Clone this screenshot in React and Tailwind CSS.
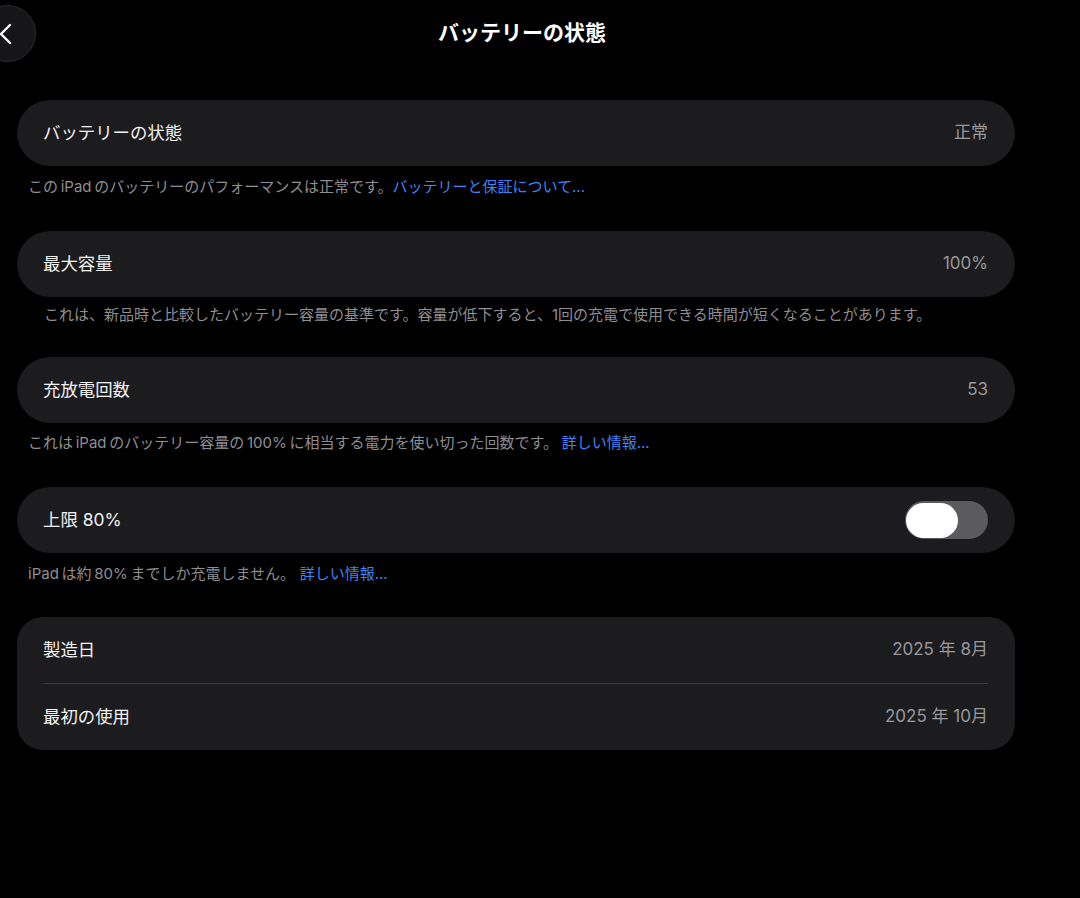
const font = { fontFamily: 'Inter, "Noto Sans CJK JP", sans-serif' };

function Row({ label, value, children }) {
  return (
    <div className="flex h-[66px] items-center justify-between pl-[26px] pr-[27px]">
      <span className="text-[17.4px] font-normal text-[#f2f2f2]">{label}</span>
      {value && <span className="text-[17px] text-[#98989d]">{value}</span>}
      {children}
    </div>
  );
}

function Card({ children }) {
  return <div className="w-[998px] rounded-[33px] bg-[#1c1c1e]">{children}</div>;
}

function Note({ children, className = "" }) {
  return (
    <p className={"text-[15px] leading-[20px] text-[#8e8e93] [word-spacing:-1.5px] " + className}>{children}</p>
  );
}

function Link({ children, className = "" }) {
  return <span className={"text-[#3d84f7] " + className}>{children}</span>;
}

function Toggle() {
  return (
    <div className="flex h-[38px] w-[83px] items-center rounded-full bg-[#5a5a5f] p-[1px]">
      <div className="h-[35px] w-[52px] rounded-full bg-white" />
    </div>
  );
}

export default function App() {
  return (
    <div className="min-h-[898px] w-[1080px] overflow-hidden bg-black" style={font}>
      <div className="relative flex h-[66px] w-[1044px] items-center justify-center">
        <div className="absolute left-[-21px] top-[5px] flex h-[57px] w-[57px] items-center justify-start rounded-full border border-[#2c2c2e] bg-[#161618] pl-[19px]">
          <svg width="14" height="22" viewBox="0 0 14 22" fill="none">
            <path d="M11 2 L2 11 L11 20" stroke="white" strokeWidth="2.4" strokeLinecap="round" strokeLinejoin="round" />
          </svg>
        </div>
        <h1 className="text-[21px] font-bold text-white">バッテリーの状態</h1>
      </div>

      <div className="pl-[17px] pt-[34px]">
        <Card>
          <Row label="バッテリーの状態" value="正常" />
        </Card>
        <Note className="pl-[11px] pt-[11px] pb-[34px]">
          この iPad のバッテリーのパフォーマンスは正常です。<Link>バッテリーと保証について...</Link>
        </Note>

        <Card>
          <Row label="最大容量" value="100%" />
        </Card>
        <Note className="pl-[27px] pt-[8px] pb-[32px]">
          これは、新品時と比較したバッテリー容量の基準です。容量が低下すると、1回の充電で使用できる時間が短くなることがあります。
        </Note>

        <Card>
          <Row label="充放電回数" value="53" />
        </Card>
        <Note className="pl-[11px] pt-[10px] pb-[34px]">
          これは iPad のバッテリー容量の 100% に相当する電力を使い切った回数です。 <Link className="ml-[1px]">詳しい情報...</Link>
        </Note>

        <Card>
          <Row label="上限 80%">
            <Toggle />
          </Row>
        </Card>
        <Note className="pl-[11px] pt-[11px] pb-[33px]">
          iPad は約 80% までしか充電しません。 <Link className="ml-[2px]">詳しい情報...</Link>
        </Note>

        <div className="w-[998px] rounded-[26px] bg-[#1c1c1e]">
          <Row label="製造日" value="2025 年 8月" />
          <div className="ml-[26px] mr-[27px] h-px bg-[#3a3a3c]" />
          <Row label="最初の使用" value="2025 年 10月" />
        </div>
      </div>
    </div>
  );
}
